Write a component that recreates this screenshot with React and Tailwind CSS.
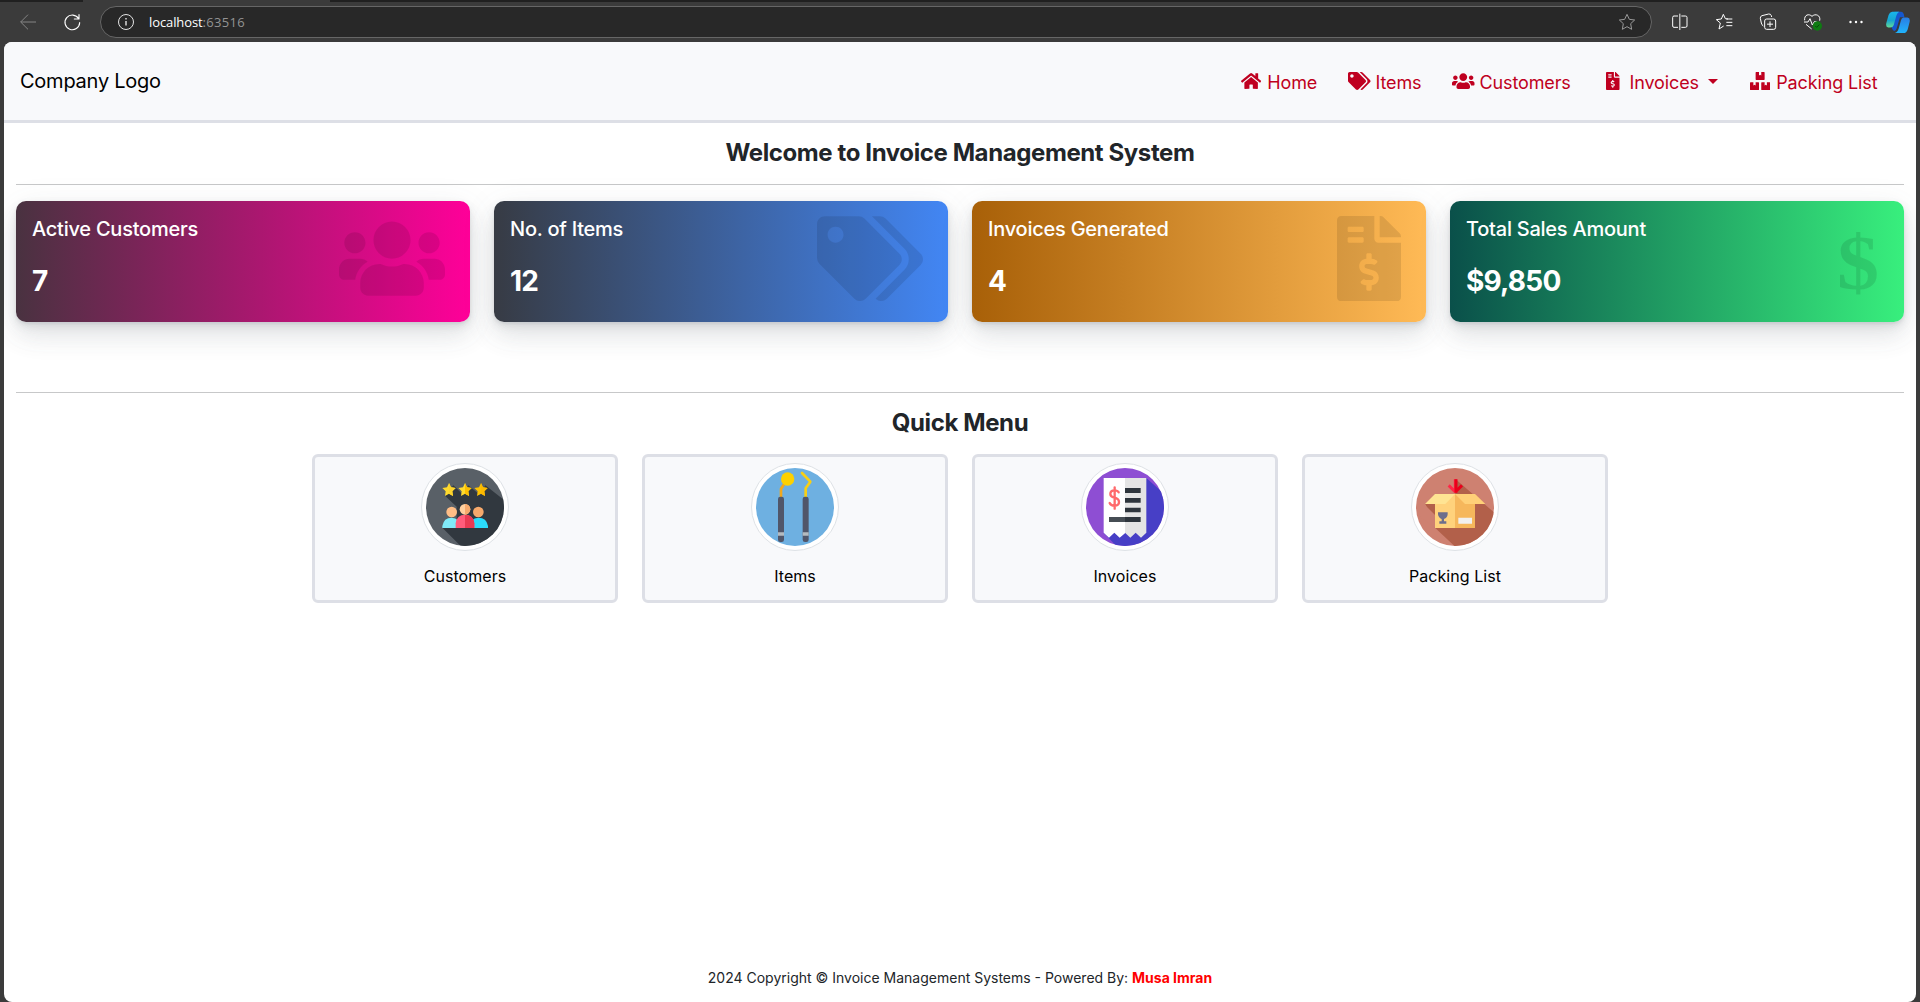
import React from "react";
import { FaHome, FaTags, FaUsers, FaFileInvoiceDollar, FaBoxes } from "react-icons/fa";

function Toolbar() {
  return (
    <div className="shrink-0">
      <div className="flex h-[2px] justify-between bg-[#3b3b3b]">
        <div className="w-[83px] bg-[#202020]" />
        <div className="w-[1590px] bg-[#202020]" />
      </div>
      <div className="flex h-10 items-center bg-[#3b3b3b]">
        <svg className="ml-5 h-4 w-4" viewBox="60 41 48 48" fill="none" stroke="#858585" strokeWidth="3">
          <path d="M108 65H62M84 43L62 65L84 87" />
        </svg>
        <svg className="ml-7 h-4 w-4 overflow-visible" viewBox="191 41 48 48" fill="none" stroke="#fff" strokeWidth="3.4" strokeLinecap="round" strokeLinejoin="round">
          <path d="M235 55A22 22 0 1 0 238 67M236 43V56H222" />
        </svg>
        <div className="ml-5 flex h-8 w-[1552px] items-center rounded-full border border-[#666] bg-[#282828] pl-[17px] pr-4">
          <svg className="h-4 w-4 overflow-visible" viewBox="0 0 16 16" fill="none" stroke="#e4e4e4">
            <circle cx="8" cy="8" r="7.5" />
            <path d="M8 7v4.5M8 4v1.4" strokeWidth="1.4" />
          </svg>
          <div className="ml-[15px] flex-1 font-['Open_Sans','Noto_Sans',sans-serif] text-[13px] leading-4 tracking-[-0.1px] text-white">
            localhost<span className="tracking-[0.3px] text-[#939393]">:63516</span>
          </div>
          <svg className="h-4 w-4 overflow-visible" viewBox="177 43 48 48" fill="none" stroke="#999" strokeWidth="3" strokeLinejoin="round">
            <path d="M201 44L208 59L224 61L212 72L215 89L201 81L187 89L190 72L178 61L194 59Z" />
          </svg>
        </div>
        <svg className="ml-5 h-4 w-4 overflow-visible" viewBox="335 43 48 48" fill="none" stroke="#fff" strokeWidth="3">
          <path d="M353 49H341Q337 49 337 53V79Q337 83 341 83H353M363 49H375Q380 49 380 53V79Q380 83 375 83H363M358.500 42V91" />
        </svg>
        <svg className="ml-7 h-4 w-4 overflow-visible" viewBox="468 43 48 48" fill="none" stroke="#fff" strokeWidth="3" strokeLinejoin="round">
          <path d="M504 58L496 57L490 44L484 58L469 60L481 70L477 88L491 79M499 58H517M499 68H517M499 78H517" />
        </svg>
        <svg className="ml-7 h-4 w-4 overflow-visible" viewBox="600 43 48 48" fill="none" stroke="#fff" strokeWidth="3" strokeLinejoin="round">
          <rect x="614" y="58" width="33" height="31" rx="6" />
          <path d="M630 65V82M621 73.500H639M610 79Q605 76 604 70L601 56Q600 50 606 48L626 43Q632 42 634 48L635 52" />
        </svg>
        <svg className="ml-7 h-4 w-[18px] overflow-visible" viewBox="732 43 54 48" fill="none" stroke="#fff" strokeWidth="3" strokeLinejoin="round">
          <path d="M734 62C732 45 747 41 756 50C766 40 783 47 779 63M738 74L755 88M732 67H744L750 57L757 76L763 66H770" />
          <circle cx="772" cy="79" r="14" fill="#0f7b12" stroke="none" />
          <path d="M766 79L770 83L778 75" stroke="#064b09" />
        </svg>
        <svg className="ml-[27px] h-4 w-[14px]" viewBox="0 0 14 16" fill="#fff">
          <circle cx="1.500" cy="8" r="1.200" /><circle cx="7" cy="8" r="1.200" /><circle cx="12.500" cy="8" r="1.200" />
        </svg>
        <svg className="ml-[23px] h-[23px] w-6" viewBox="977 32 74 69">
          <defs>
            <linearGradient id="cpL" x1="0" y1="0" x2="0" y2="1"><stop offset="0" stopColor="#18b5ee" /><stop offset=".55" stopColor="#17a5cf" /><stop offset="1" stopColor="#62dc96" /></linearGradient>
            <linearGradient id="cpR" x1="0" y1="0" x2="0" y2="1"><stop offset="0" stopColor="#2a7de4" /><stop offset="1" stopColor="#20b4fb" /></linearGradient>
          </defs>
          <path d="M1003 33H1024Q1030 33 1032 41L1034 50H1020L1010 84Q1006 98 998 90L994 81Z" fill="#1557cf" />
          <path d="M996 33H1018Q1011 36 1008 49L1001 74Q998 82 990 82H984Q975 81 978 68L985 43Q988 34 996 33Z" fill="url(#cpL)" />
          <path d="M1030 51H1043Q1052 52 1050 64L1044 87Q1040 99 1031 99H1004Q1013 97 1016 86L1023 60Q1025 52 1030 51Z" fill="url(#cpR)" />
        </svg>
      </div>
    </div>
  );
}

function NavItem({ Icon, iconWidth, label, className }) {
  return (
    <a className={"flex items-center " + className}>
      <Icon className={"h-[18px] shrink-0 " + iconWidth} />
      <span className="whitespace-nowrap pt-[2px]">{label}</span>
    </a>
  );
}

function Header() {
  return (
    <header className="flex h-[81px] shrink-0 items-center justify-between border-b-[3px] border-[#dddfe6] bg-[#f8f9fb] pl-4 pr-[39px]">
      <div className="text-[20px] leading-[30px] tracking-[-0.24px] text-black">Company Logo</div>
      <nav className="flex items-center text-[18px] leading-[27px] tracking-[-0.13px] text-[#bf0020]">
        <NavItem Icon={FaHome} iconWidth="w-[20.250px]" label="Home" className="w-[107px] gap-[6px]" />
        <NavItem Icon={FaTags} iconWidth="w-[22.500px]" label="Items" className="w-[104px] gap-[5px]" />
        <NavItem Icon={FaUsers} iconWidth="w-[22.500px]" label="Customers" className="w-[154px] gap-[5px]" />
        <div className="flex w-[144px] items-center">
          <NavItem Icon={FaFileInvoiceDollar} iconWidth="w-[13.500px]" label="Invoices" className="gap-[10px]" />
          <span className="ml-[9px] border-x-[5px] border-t-[5px] border-x-transparent border-t-[#bf0020]" />
        </div>
        <NavItem Icon={FaBoxes} iconWidth="w-[20.250px]" label="Packing List" className="w-[127px] gap-[6px]" />
      </nav>
    </header>
  );
}

function StatCard({ title, value, Icon, iconWidth, gradient }) {
  return (
    <div className={"flex h-[121px] justify-between rounded-[10px] pl-4 pr-[25px] text-white shadow-[0_7.5px_35px_rgba(90,97,105,0.1),0_15px_22.5px_rgba(90,97,105,0.1),0_4px_8.5px_rgba(90,97,105,0.12),0_2px_3px_rgba(90,97,105,0.1)] " + gradient}>
      <div className="pt-4">
        <h5 className="text-[20px] font-medium leading-6 tracking-[-0.24px]">{title}</h5>
        <h2 className="mt-[22px] text-[28px] font-bold leading-9 tracking-[-0.8px]">{value}</h2>
      </div>
      {Icon ? (
        <Icon className={"mt-[14.500px] h-[85.330px] shrink-0 text-black/10 " + iconWidth} />
      ) : (
        <span className="mt-[14px] origin-right scale-x-[1.08] font-['Liberation_Serif',serif] text-[78px] font-bold leading-[96px] text-black/10">$</span>
      )}
    </div>
  );
}

function Star({ x, left, right }) {
  return (
    <g transform={`translate(${x} 329)`}>
      <path d="M0-20L6-7L20-5L10 5L12 19L0 12L-12 19L-10 5L-20-5L-6-7Z" fill={left} />
      <path d="M0-20L6-7L20-5L10 5L12 19L0 12Z" fill={right} />
    </g>
  );
}

function CustomersArt() {
  return (
    <svg viewBox="378 264 234 234" className="h-full w-full rounded-full bg-[#596067]">
      <path d="M470 445V443H427L484 500H620V366L556 316L540 345L505 316L490 345L460 316L435 347L470 380Z" fill="#31383f" />
      <Star x={447} left="#ffda2d" right="#fdd32c" />
      <Star x={495} left="#ffda2d" right="#fdbf00" />
      <Star x={543} left="#fdc100" right="#fdb900" />
      <circle cx="455" cy="396" r="16" fill="#ffbd86" />
      <circle cx="535" cy="396" r="16" fill="#f6a96c" />
      <path d="M427 444V438Q431 413 455 413Q479 413 480 444Z" fill="#80eaf8" />
      <path d="M510 444Q510 413 535 413Q560 413 564 438V444Z" fill="#2bdcfb" />
      <path d="M467 444V430Q470 404 495 404Q520 404 523 430V444Z" fill="#ff5c7b" />
      <path d="M495 404Q520 404 523 430V444H495Z" fill="#e93a53" />
      <circle cx="495" cy="388" r="16" fill="#ffcf9e" />
      <path d="M495 372A16 16 0 0 1 495 404Z" fill="#f6a96c" />
    </svg>
  );
}

function ItemsArt() {
  return (
    <svg viewBox="48 54 234 234" className="h-full w-full rounded-full bg-[#6eb0e1]">
      <path d="M123 142V117L132 103" fill="none" stroke="#f2a81c" strokeWidth="8" />
      <circle cx="143" cy="87" r="20" fill="#fdd100" />
      <path d="M186 69L211 95L197 115V142" fill="none" stroke="#f8cf14" strokeWidth="8" strokeLinecap="round" strokeLinejoin="round" />
      <rect x="114" y="140" width="18" height="136" rx="7" fill="#50566a" />
      <rect x="188" y="140" width="18" height="136" rx="7" fill="#50566a" />
      <path d="M114 247H132V257H114ZM188 247H206V257H188Z" fill="#b4bbc0" />
    </svg>
  );
}

function InvoicesArt() {
  return (
    <svg viewBox="48 54 234 234" className="h-full w-full rounded-full bg-[#8e4ed3]">
      <path d="M229 84L290 138V300H150L101 248Z" fill="#473fc6" />
      <path d="M101 84H165V250L149 263L133 248L117 263L101 248Z" fill="#fff" />
      <path d="M165 84H229V248L213 263L197 248L181 263L165 248Z" fill="#e4e4e4" />
      <path d="M165 114H212V129H165ZM165 144H212V158H165ZM165 173H212V187H165ZM165 201H212V216H165Z" fill="#2e353c" />
      <path d="M117 201H165V216H117Z" fill="#464d54" />
      <path d="M146 127Q143 121 133 121Q121 121 121 132Q121 140 133 143Q147 146 147 156Q147 167 134 167Q122 167 119 159M134 112V176" fill="none" stroke="#ff6a6c" strokeWidth="7" strokeLinecap="round" />
    </svg>
  );
}

function PackingArt() {
  return (
    <svg viewBox="48 54 234 234" className="h-full w-full rounded-full bg-[#ce8171]">
      <path d="M167 88L290 194V300H176L105 233L76 161H165Z" fill="#b2604a" />
      <path d="M60 150L105 195V233L60 200Z" fill="#ce8171" />
      <path d="M76 162H105V191Z" fill="#b2604a" />
      <path d="M105 132H165V234H105Z" fill="#ffd27c" />
      <path d="M165 132H225V234H165Z" fill="#f6b75c" />
      <path d="M105 132H165L136 162H75Z" fill="#ffe493" />
      <path d="M165 132H225L256 162H195Z" fill="#ffd078" />
      <path d="M175 203H216V221H175Z" fill="#f2f0ef" />
      <path d="M114 187H143V193Q142 204 132 207V214H139V221H118V214H125V207Q115 203 114 193Z" fill="#6d6e8c" />
      <path d="M166 88V128M146 106L166 126" fill="none" stroke="#ff2848" strokeWidth="9" />
      <path d="M186 106L166 126M168 88V128" fill="none" stroke="#ea001b" strokeWidth="9" />
    </svg>
  );
}

function QuickCard({ label, Art }) {
  return (
    <div className="flex h-[149px] flex-col items-center rounded-[6px] border-[3px] border-[#dddfe6] bg-[#f8f9fb] pt-[6px]">
      <div className="h-[88px] w-[88px] rounded-full border border-[#dee2e6] bg-white p-1">
        <Art />
      </div>
      <div className="mt-[13px] text-[16px] leading-6 tracking-[0.05px] text-black">{label}</div>
    </div>
  );
}

export default function App() {
  return (
    <div className="flex h-[1002px] w-[1920px] flex-col overflow-hidden bg-[#3b3b3b] font-['Inter',sans-serif]">
      <Toolbar />
      <div className="mx-1 flex flex-1 flex-col overflow-hidden rounded-[8px] bg-white">
        <Header />
        <main className="flex flex-1 flex-col px-3 text-[#212529]">
          <h1 className="mt-[15px] text-center text-[24px] font-bold leading-[29px] tracking-[-0.4px]">Welcome to Invoice Management System</h1>
          <hr className="mt-[17px] border-[#c7c8c9]" />
          <section className="mt-4 grid grid-cols-4 gap-6">
            <StatCard title="Active Customers" value="7" Icon={FaUsers} iconWidth="w-[106px]" gradient="bg-[linear-gradient(to_right,#493240,#ff0099)]" />
            <StatCard title="No. of Items" value="12" Icon={FaTags} iconWidth="w-[106px]" gradient="bg-[linear-gradient(to_right,#373b44,#4286f4)]" />
            <StatCard title="Invoices Generated" value="4" Icon={FaFileInvoiceDollar} iconWidth="w-16" gradient="bg-[linear-gradient(to_right,#a86008,#ffba56)]" />
            <StatCard title="Total Sales Amount" value="$9,850" gradient="bg-[linear-gradient(to_right,#0a504a,#38ef7d)]" />
          </section>
          <hr className="mt-[70px] border-[#c7c8c9]" />
          <h2 className="mt-[15px] text-center text-[24px] font-bold leading-[29px] tracking-[-0.4px]">Quick Menu</h2>
          <section className="mx-auto mt-[17px] grid w-[1296px] grid-cols-4 gap-6">
            <QuickCard label="Customers" Art={CustomersArt} />
            <QuickCard label="Items" Art={ItemsArt} />
            <QuickCard label="Invoices" Art={InvoicesArt} />
            <QuickCard label="Packing List" Art={PackingArt} />
          </section>
          <footer className="mb-[14px] mt-auto text-center text-[14px] leading-[21px]">
            2024 Copyright © Invoice Management Systems - Powered By: <span className="font-bold text-[#ff0000]">Musa Imran</span>
          </footer>
        </main>
      </div>
    </div>
  );
}
